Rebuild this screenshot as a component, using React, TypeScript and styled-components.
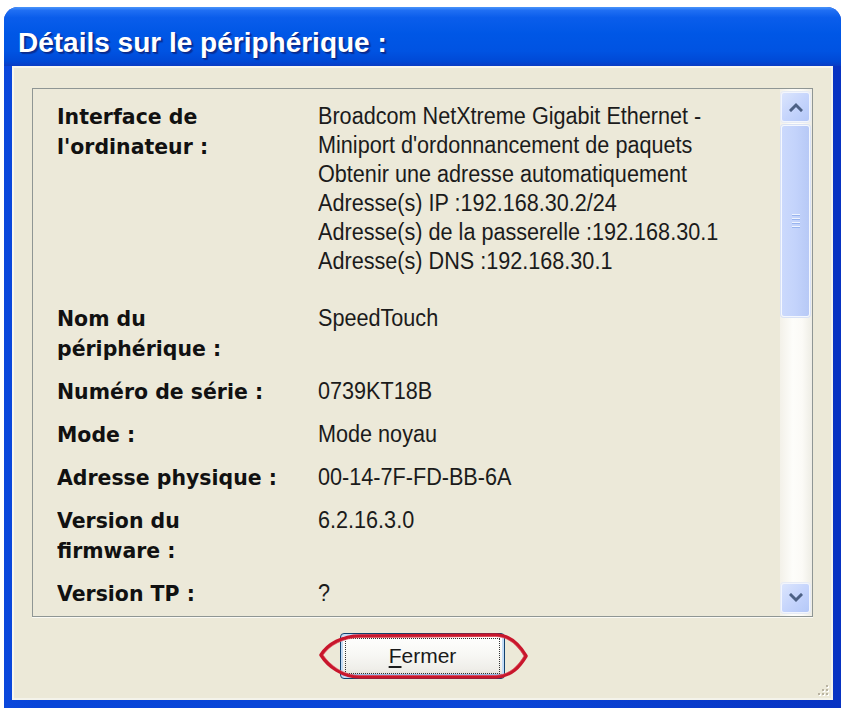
import React from 'react';
import styled, { createGlobalStyle } from 'styled-components';

const GlobalStyle = createGlobalStyle`
  html, body { margin: 0; padding: 0; background: #ffffff; }
  #root { width: 845px; height: 714px; }
`;

const Window = styled.div`
  box-sizing: border-box;
  width: 837px;
  height: 701px;
  margin: 7px 0 0 4px;
  display: flex;
  flex-direction: column;
  border-radius: 14px 14px 0 0;
  overflow: hidden;
  background: #0a3fd6;
`;

const TitleBar = styled.div`
  box-sizing: border-box;
  flex: none;
  height: 59px;
  display: flex;
  align-items: center;
  padding: 13px 0 0 14px;
  background: linear-gradient(
    180deg,
    #4a95fa 0%,
    #1f6ef3 6%,
    #0a5deb 18%,
    #0057e6 45%,
    #0053e2 75%,
    #0049d6 92%,
    #0a3cc4 100%
  );
  font-family: 'Liberation Sans', Arial, sans-serif;
  font-weight: 700;
  font-size: 28px;
  color: #ffffff;
  text-shadow: 1px 1px 0 #0b2a8a, 2px 2px 1px rgba(8, 26, 110, 0.6);
  white-space: nowrap;
`;

const Frame = styled.div`
  flex: 1;
  display: flex;
  padding: 0 8px 8px 8px;
  background: linear-gradient(90deg, #0a47dc 0%, #0845d8 4%, #0a45d6 60%, #0833c2 100%);
`;

const Body = styled.div`
  position: relative;
  flex: 1;
  display: flex;
  flex-direction: column;
  padding: 22px 20px 0 20px;
  background: #ece9d8;
  box-shadow: inset 2px 2px 0 #f7f6ee, inset -2px -2px 0 #f4f3ea;
`;

const Panel = styled.div`
  flex: none;
  height: 529px;
  box-sizing: border-box;
  display: flex;
  border: 1px solid #8f9694;
  background: #ece9d9;
  box-shadow: 0 1px 0 #fbfaf4;
`;

const Content = styled.div`
  flex: 1;
  display: grid;
  grid-template-columns: 261px 1fr;
  align-content: start;
  row-gap: 13px;
  padding: 13px 0 0 24px;
  overflow: hidden;
`;

/* Tahoma-like tall text: a larger face squeezed horizontally */
const Label = styled.div<{ $after?: number }>`
  font-family: 'DejaVu Sans', Tahoma, sans-serif;
  font-weight: 700;
  font-size: 22px;
  line-height: 30px;
  color: #111111;
  white-space: nowrap;
  transform: scaleX(0.93);
  transform-origin: left top;
  margin-bottom: ${(p) => p.$after ?? 0}px;
`;

const Value = styled.div<{ $after?: number }>`
  font-family: 'Liberation Sans', Arial, sans-serif;
  font-size: 23.5px;
  line-height: 29px;
  color: #1b1b1b;
  white-space: nowrap;
  transform: scaleX(0.92);
  transform-origin: left top;
  margin-bottom: ${(p) => p.$after ?? 0}px;
`;

const Scrollbar = styled.div`
  flex: none;
  width: 32px;
  box-sizing: border-box;
  display: flex;
  flex-direction: column;
  padding: 3px 2px 3px 1px;
  background: linear-gradient(90deg, #f3f1e9 0%, #fdfdfa 40%, #fbfaf6 70%, #eeede5 100%);
`;

const ArrowButton = styled.div`
  flex: none;
  height: 30px;
  box-sizing: border-box;
  display: flex;
  align-items: center;
  justify-content: center;
  border: 1px solid #f2f5fd;
  border-radius: 3px;
  background: linear-gradient(135deg, #dbe5fd 0%, #c6d5fc 50%, #b4c8f8 100%);
  box-shadow: 0 0 0 1px #e6ebf5;
`;

const Thumb = styled.div`
  flex: none;
  height: 192px;
  margin-top: 3px;
  box-sizing: border-box;
  display: flex;
  flex-direction: column;
  align-items: center;
  justify-content: center;
  gap: 2px;
  border: 1px solid #f4f7fe;
  border-radius: 3px;
  background: linear-gradient(90deg, #cbd9fc 0%, #c3d3fb 50%, #b7c9f6 100%);
  box-shadow: 0 0 0 1px #d9e2f5;
`;

const GripLine = styled.span`
  display: block;
  width: 8px;
  height: 1px;
  background: #eef3fe;
  box-shadow: 0 1px 0 #98b4ee;
  margin-bottom: 1px;
`;

const Track = styled.div`
  flex: 1;
`;

const ButtonRow = styled.div`
  flex: 1;
  display: flex;
  justify-content: center;
  align-items: flex-start;
  padding-top: 16px;
`;

const ButtonWrap = styled.div`
  position: relative;
`;

const CloseButton = styled.button`
  width: 165px;
  height: 46px;
  box-sizing: border-box;
  padding: 0;
  display: flex;
  align-items: center;
  justify-content: center;
  border: 1px solid #10416f;
  border-radius: 4px;
  background: linear-gradient(180deg, #ffffff 0%, #f8f8f5 45%, #efeee9 80%, #dcd8ce 100%);
  box-shadow: inset 0 0 0 2px #c4dcf6, inset 0 -2px 0 2px #98bbe9;
  font-family: 'Liberation Sans', Arial, sans-serif;
  font-size: 21px;
  color: #1a1a1a;
  outline: 1px dotted #333333;
  outline-offset: -6px;
`;

const AccessKey = styled.span`
  text-decoration: underline;
  text-underline-offset: 3px;
`;

const Annotation = styled.svg`
  position: absolute;
  left: -20px;
  top: -3px;
  width: 207px;
  height: 52px;
  pointer-events: none;
  overflow: visible;
`;

const Grip = styled.svg`
  position: absolute;
  right: 3px;
  bottom: 3px;
  width: 14px;
  height: 14px;
`;

const rows: { label: string[]; value: string[]; after?: number }[] = [
  {
    label: ['Interface de', "l'ordinateur :"],
    value: [
      'Broadcom NetXtreme Gigabit Ethernet -',
      "Miniport d'ordonnancement de paquets",
      'Obtenir une adresse automatiquement',
      'Adresse(s) IP :192.168.30.2/24',
      'Adresse(s) de la passerelle :192.168.30.1',
      'Adresse(s) DNS :192.168.30.1',
    ],
    after: 15,
  },
  { label: ['Nom du', 'périphérique :'], value: ['SpeedTouch'] },
  { label: ['Numéro de série :'], value: ['0739KT18B'] },
  { label: ['Mode :'], value: ['Mode noyau'] },
  { label: ['Adresse physique :'], value: ['00-14-7F-FD-BB-6A'] },
  { label: ['Version du', 'firmware :'], value: ['6.2.16.3.0'] },
  { label: ['Version TP :'], value: ['?'] },
];

const Chevron: React.FC<{ up?: boolean }> = ({ up }) => (
  <svg width="14" height="10" viewBox="0 0 14 10">
    <polyline
      points={up ? '2,8 7,3 12,8' : '2,2 7,7 12,2'}
      fill="none"
      stroke="#4d6185"
      strokeWidth="3"
      strokeLinecap="square"
    />
  </svg>
);

export default function App() {
  return (
    <>
      <GlobalStyle />
      <Window>
        <TitleBar>Détails sur le périphérique :</TitleBar>
        <Frame>
          <Body>
            <Panel>
              <Content>
                {rows.map((r, i) => (
                  <React.Fragment key={i}>
                    <Label $after={r.after}>
                      {r.label.map((l) => (
                        <div key={l}>{l}</div>
                      ))}
                    </Label>
                    <Value $after={r.after}>
                      {r.value.map((v) => (
                        <div key={v}>{v}</div>
                      ))}
                    </Value>
                  </React.Fragment>
                ))}
              </Content>
              <Scrollbar>
                <ArrowButton>
                  <Chevron up />
                </ArrowButton>
                <Thumb>
                  <GripLine />
                  <GripLine />
                  <GripLine />
                  <GripLine />
                </Thumb>
                <Track />
                <ArrowButton>
                  <Chevron />
                </ArrowButton>
              </Scrollbar>
            </Panel>
            <ButtonRow>
              <ButtonWrap>
                <CloseButton type="button">
                  <AccessKey>F</AccessKey>ermer
                </CloseButton>
                <Annotation viewBox="0 0 207 52">
                  <path
                    d="M 40 6 L 176 5 C 191 5 200 16 206 26 C 200 36 192 46 176 47 L 40 47 C 22 47 8 36 1 25 C 8 14 22 6 40 6 Z"
                    fill="none"
                    stroke="#c8162c"
                    strokeWidth="3.5"
                    strokeLinejoin="round"
                  />
                  <path
                    d="M 42 7.5 L 176 6.5 C 190 7 199 17 204 26 C 199 35 190 45 176 45.5 L 40 45.5 C 23 45.5 10 35 3 25 C 10 15 23 7.5 42 7.5 Z"
                    fill="none"
                    stroke="#e35a66"
                    strokeWidth="1"
                    opacity="0.6"
                  />
                </Annotation>
              </ButtonWrap>
            </ButtonRow>
            <Grip viewBox="0 0 14 14">
              {[
                [10, 2],
                [6, 6],
                [10, 6],
                [2, 10],
                [6, 10],
                [10, 10],
              ].map(([x, y]) => (
                <g key={`${x}-${y}`}>
                  <rect x={x + 1} y={y + 1} width="2" height="2" fill="#ffffff" />
                  <rect x={x} y={y} width="2" height="2" fill="#b9b3a1" />
                </g>
              ))}
            </Grip>
          </Body>
        </Frame>
      </Window>
    </>
  );
}
